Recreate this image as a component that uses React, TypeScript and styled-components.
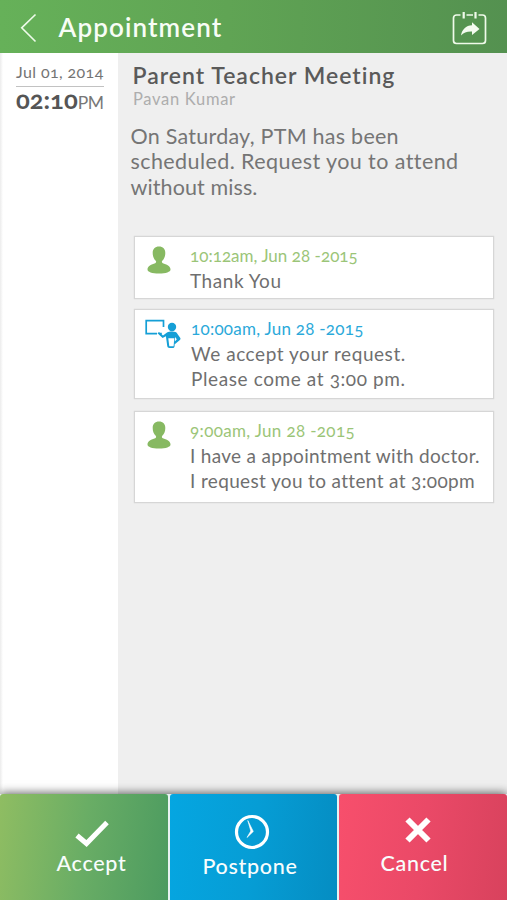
import React from "react";
import styled, { createGlobalStyle } from "styled-components";

const GlobalStyle = createGlobalStyle`
  *, *::before, *::after { box-sizing: border-box; }
  body {
    margin: 0;
    background: #efefef;
    font-family: Lato, sans-serif;
    font-variant-numeric: oldstyle-nums;
    font-variant-ligatures: none;
  }
`;

const Screen = styled.div`
  width: 100%;
  height: 100vh;
  display: flex;
  flex-direction: column;
  overflow: hidden;
`;

const Header = styled.header`
  flex: none;
  height: 53px;
  display: flex;
  align-items: center;
  padding: 0 20px;
  background: linear-gradient(90deg, #66b159 0%, #60a454 45%, #549150 100%);
`;

const BackIcon = styled.svg`
  width: 17px;
  height: 30px;
  margin-top: 2px;
`;

const HeaderTitle = styled.h1`
  flex: 1;
  margin: 1px 0 0 21.5px;
  font-size: 26px;
  font-weight: 600;
  line-height: 53px;
  letter-spacing: 1.1px;
  color: #f8fdf6;
`;

const ShareIcon = styled.svg`
  width: 36px;
  height: 34px;
  margin: 2px -0.5px 0 0;
`;

const Main = styled.main`
  flex: 1;
  display: flex;
  min-height: 0;
`;

const DateColumn = styled.aside`
  flex: none;
  width: 118px;
  padding: 8px 14px 0 16px;
  background: linear-gradient(90deg, #ececec 0, #fff 3px);
  color: #636363;
`;

const DateText = styled.div`
  padding-bottom: 3px;
  border-bottom: 1px solid #c2c2c2;
  font-size: 16px;
  line-height: 22px;
  letter-spacing: 0.4px;
  white-space: nowrap;
  color: #747474;
`;

const Time = styled.div`
  display: flex;
  align-items: baseline;
  line-height: 24px;
  font-size: 25.5px;
  font-weight: 700;
  color: #555;
`;

const Meridiem = styled.span`
  font-size: 17.5px;
  font-weight: 400;
  letter-spacing: -0.5px;
  color: #777;
`;

const Content = styled.section`
  flex: 1;
  padding: 8px 13px 0 16px;
  background: #efefef;
`;

const Title = styled.h2`
  margin: 0 0 0 -1.5px;
  font-size: 23px;
  font-weight: 600;
  line-height: 29px;
  letter-spacing: 1px;
  white-space: nowrap;
  color: #5a5a5a;
`;

const Author = styled.div`
  margin-left: -1px;
  font-size: 16.5px;
  line-height: 19px;
  letter-spacing: 0.7px;
  color: #adadad;
`;

const Message = styled.p`
  margin: 15px 0 0 -3.5px;
  font-size: 21.5px;
  line-height: 25.3px;
  color: #757575;
`;

const Line = styled.span<{ $spacing: number }>`
  display: block;
  white-space: nowrap;
  letter-spacing: ${(p) => p.$spacing}px;
`;

const Thread = styled.div`
  display: flex;
  flex-direction: column;
  margin-top: 36px;
`;

const Card = styled.article<{ $height: number; $gap: number }>`
  display: flex;
  height: ${(p) => p.$height}px;
  margin: 0 0 ${(p) => p.$gap}px;
  border: 1px solid #d6d6d6;
  box-shadow: 0 0 1px #d0d0d0;
  background: #fff;
`;

const Avatar = styled.div<{ $top: number; $left: number }>`
  flex: none;
  width: 55px;
  padding: ${(p) => p.$top}px 0 0 ${(p) => p.$left}px;

  svg { display: block; }
`;

const CardBody = styled.div<{ $top: number; $indent: number }>`
  padding: ${(p) => p.$top}px 0 0 ${(p) => p.$indent}px;
  font-size: 19px;
  line-height: 25px;
  color: #6f6f6f;
`;

const Stamp = styled.div<{ $color: string; $spacing: number }>`
  font-size: 17px;
  line-height: 22px;
  letter-spacing: ${(p) => p.$spacing}px;
  white-space: nowrap;
  margin-bottom: 1px;
  color: ${(p) => p.$color};
`;

const Actions = styled.footer`
  flex: none;
  display: grid;
  grid-template-columns: 168px 167px 168px;
  column-gap: 2px;
  height: 106px;
  background: #e8f2f2;
  box-shadow: 0 -1px 9px rgba(0, 0, 0, 0.62);
`;

const Action = styled.button<{ $from: string; $mid: string; $to: string; $left: number; $right: number; $top: number }>`
  display: flex;
  flex-direction: column;
  align-items: center;
  border: 0;
  border-radius: 3px 3px 0 0;
  padding: ${(p) => p.$top}px ${(p) => p.$right}px 0 ${(p) => p.$left}px;
  background: linear-gradient(97deg, ${(p) => p.$from}, ${(p) => p.$mid} 50%, ${(p) => p.$to});
  color: #f8fdfd;
  font: 500 21.5px Lato, sans-serif;

  svg { display: block; }
`;

const ActionLabel = styled.span<{ $gap: number }>`
  margin-top: ${(p) => p.$gap}px;
  line-height: 26px;
  letter-spacing: 0.7px;
  white-space: nowrap;
`;

const CancelIcon = styled.svg`
  width: 26px;
  height: 26px;
  margin-left: 7px;
`;

const ClockIcon = styled.svg`
  width: 36px;
  height: 36px;
  margin-left: 4px;
`;

const PersonIcon = () => (
  <svg width="24" height="28" viewBox="0 0 24 28" fill="#87b962">
    <path d="M12 .5c-4 0-6.300 2.600-6.300 6.500 0 3.400 1.100 6 3 7.700.7.800.6 2-.5 2.500C4.500 18.500.500 19.800.500 23.500c0 2.500 4.500 4 11.500 4s11.500-1.500 11.500-4c0-3.700-4-5-7.700-6.300-1.100-.5-1.200-1.700-.5-2.500 1.900-1.700 3-4.300 3-7.700 0-3.900-2.300-6.500-6.300-6.500Z" />
  </svg>
);

const TeacherIcon = () => (
  <svg width="37" height="31" viewBox="0 0 37 31" fill="#159fd6">
    <path d="M13 14.600H2.200V1.700H19.500V8M15.800 14.600h2" fill="none" stroke="#159fd6" strokeWidth="1.700" />
    <circle cx="28" cy="8" r="4.200" />
    <path d="m13.500 14.300 1.500-1.200 4 3.400 4-2.900c1.400-1 2.900-1.200 5-1.200 2.800 0 4.800.7 5.500 2.500l3 4.400-.3 1.500-5.100 4.200-1.200-1.400 2.900-3.400-1.800-2.300-.4 9c-.1 1.500-.8 2.100-2 2.100h-3c-1.400 0-2.200-.7-2.400-2.200l-1.300-9.500-3.300 1.800Z" />
    <path d="M24.300 19.300h6l-.7 8h-4.300Z" fill="#fff" />
  </svg>
);

const GREEN = "#9bc578";
const BLUE = "#2ba9da";

type Entry = {
  teacher?: boolean;
  height: number;
  gap: number;
  top: number;
  iconTop: number;
  stamp: string;
  stampSpacing: number;
  lines: [string, number][];
};

const entries: Entry[] = [
  {
    height: 63, gap: 10, top: 8, iconTop: 9,
    stamp: "10:12am, Jun 28 -2015", stampSpacing: 0.03,
    lines: [["Thank You", 0.55]],
  },
  {
    teacher: true, height: 90, gap: 12, top: 8, iconTop: 9,
    stamp: "10:00am, Jun 28 -2015", stampSpacing: 0.26,
    lines: [["We accept your request.", 0.55], ["Please come at 3:00 pm.", 0.6]],
  },
  {
    height: 92, gap: 0, top: 8, iconTop: 9,
    stamp: "9:00am, Jun 28 -2015", stampSpacing: 0.35,
    lines: [["I have a appointment with doctor.", 0.3], ["I request you to attent at 3:00pm", 0.35]],
  },
];

export default function App() {
  return (
    <>
      <GlobalStyle />
      <Screen>
        <Header>
          <BackIcon viewBox="0 0 17 30" fill="none" stroke="#eefbea" strokeWidth="1.600">
            <path d="M15.500 1.500 1.700 14.800 15.500 28.500" />
          </BackIcon>
          <HeaderTitle>Appointment</HeaderTitle>
          <ShareIcon viewBox="0 0 36 34" fill="none" stroke="#effaea" strokeWidth="1.700">
            <path d="M8.500 4H4.500A3 3 0 0 0 1.500 7V29.500A3 3 0 0 0 4.500 32.500H30.500A3 3 0 0 0 33.500 29.500V7A3 3 0 0 0 30.500 4H26.500M14.500 4H21" />
            <path d="M11.700 1V7.500M23.500 1V7.500" strokeWidth="2.200" />
            <path d="M9 24.500C10 18.500 14 14.500 20 14.300V11.300L27.500 18 20 24V20.500C15 20.300 11.500 21.500 9 24.500Z" fill="#f4fbf0" stroke="none" />
          </ShareIcon>
        </Header>
        <Main>
          <DateColumn>
            <DateText>Jul 01, 2014</DateText>
            <Time>
              02:10<Meridiem>PM</Meridiem>
            </Time>
          </DateColumn>
          <Content>
            <Title>Parent Teacher Meeting</Title>
            <Author>Pavan Kumar</Author>
            <Message>
              <Line $spacing={0.25}>On Saturday, PTM has been</Line>
              <Line $spacing={0.42}>scheduled. Request you to attend</Line>
              <Line $spacing={0.1}>without miss.</Line>
            </Message>
            <Thread>
              {entries.map((e) => (
                <Card key={e.stamp} $height={e.height} $gap={e.gap}>
                  <Avatar $top={e.iconTop} $left={e.teacher ? 9 : 12}>
                    {e.teacher ? <TeacherIcon /> : <PersonIcon />}
                  </Avatar>
                  <CardBody $top={e.top} $indent={e.teacher ? 1 : 0}>
                    <Stamp $color={e.teacher ? BLUE : GREEN} $spacing={e.stampSpacing}>{e.stamp}</Stamp>
                    {e.lines.map(([text, spacing]) => (
                      <Line key={text} $spacing={spacing}>{text}</Line>
                    ))}
                  </CardBody>
                </Card>
              ))}
            </Thread>
          </Content>
        </Main>
        <Actions>
          <Action $from="#8fbd62" $mid="#69ad65" $to="#4c9b60" $left={15} $right={0} $top={26}>
            <svg width="34" height="28" viewBox="0 0 34 28" fill="none" stroke="#fff" strokeWidth="5">
              <path d="M2 15.500 11.500 23.500 32 2.500" />
            </svg>
            <ActionLabel $gap={2}>Accept</ActionLabel>
          </Action>
          <Action $from="#05a6e1" $mid="#069dd5" $to="#058dc2" $left={0} $right={7} $top={20}>
            <ClockIcon viewBox="0 0 36 36" fill="none" stroke="#fff">
              <circle cx="18" cy="18" r="15.500" strokeWidth="3.200" />
              <path d="M13.800 6.500 19.300 17.500 13 23.500 16.800 17Z" fill="#fff" strokeWidth="0.600" />
            </ClockIcon>
            <ActionLabel $gap={3}>Postpone</ActionLabel>
          </Action>
          <Action $from="#f74f6c" $mid="#ea4967" $to="#d8425d" $left={0} $right={17} $top={23}>
            <CancelIcon viewBox="0 0 26 26" fill="none" stroke="#fff" strokeWidth="6">
              <path d="M2.500 2.500 23.500 23.500M23.500 2.500 2.500 23.500" />
            </CancelIcon>
            <ActionLabel $gap={7}>Cancel</ActionLabel>
          </Action>
        </Actions>
      </Screen>
    </>
  );
}
